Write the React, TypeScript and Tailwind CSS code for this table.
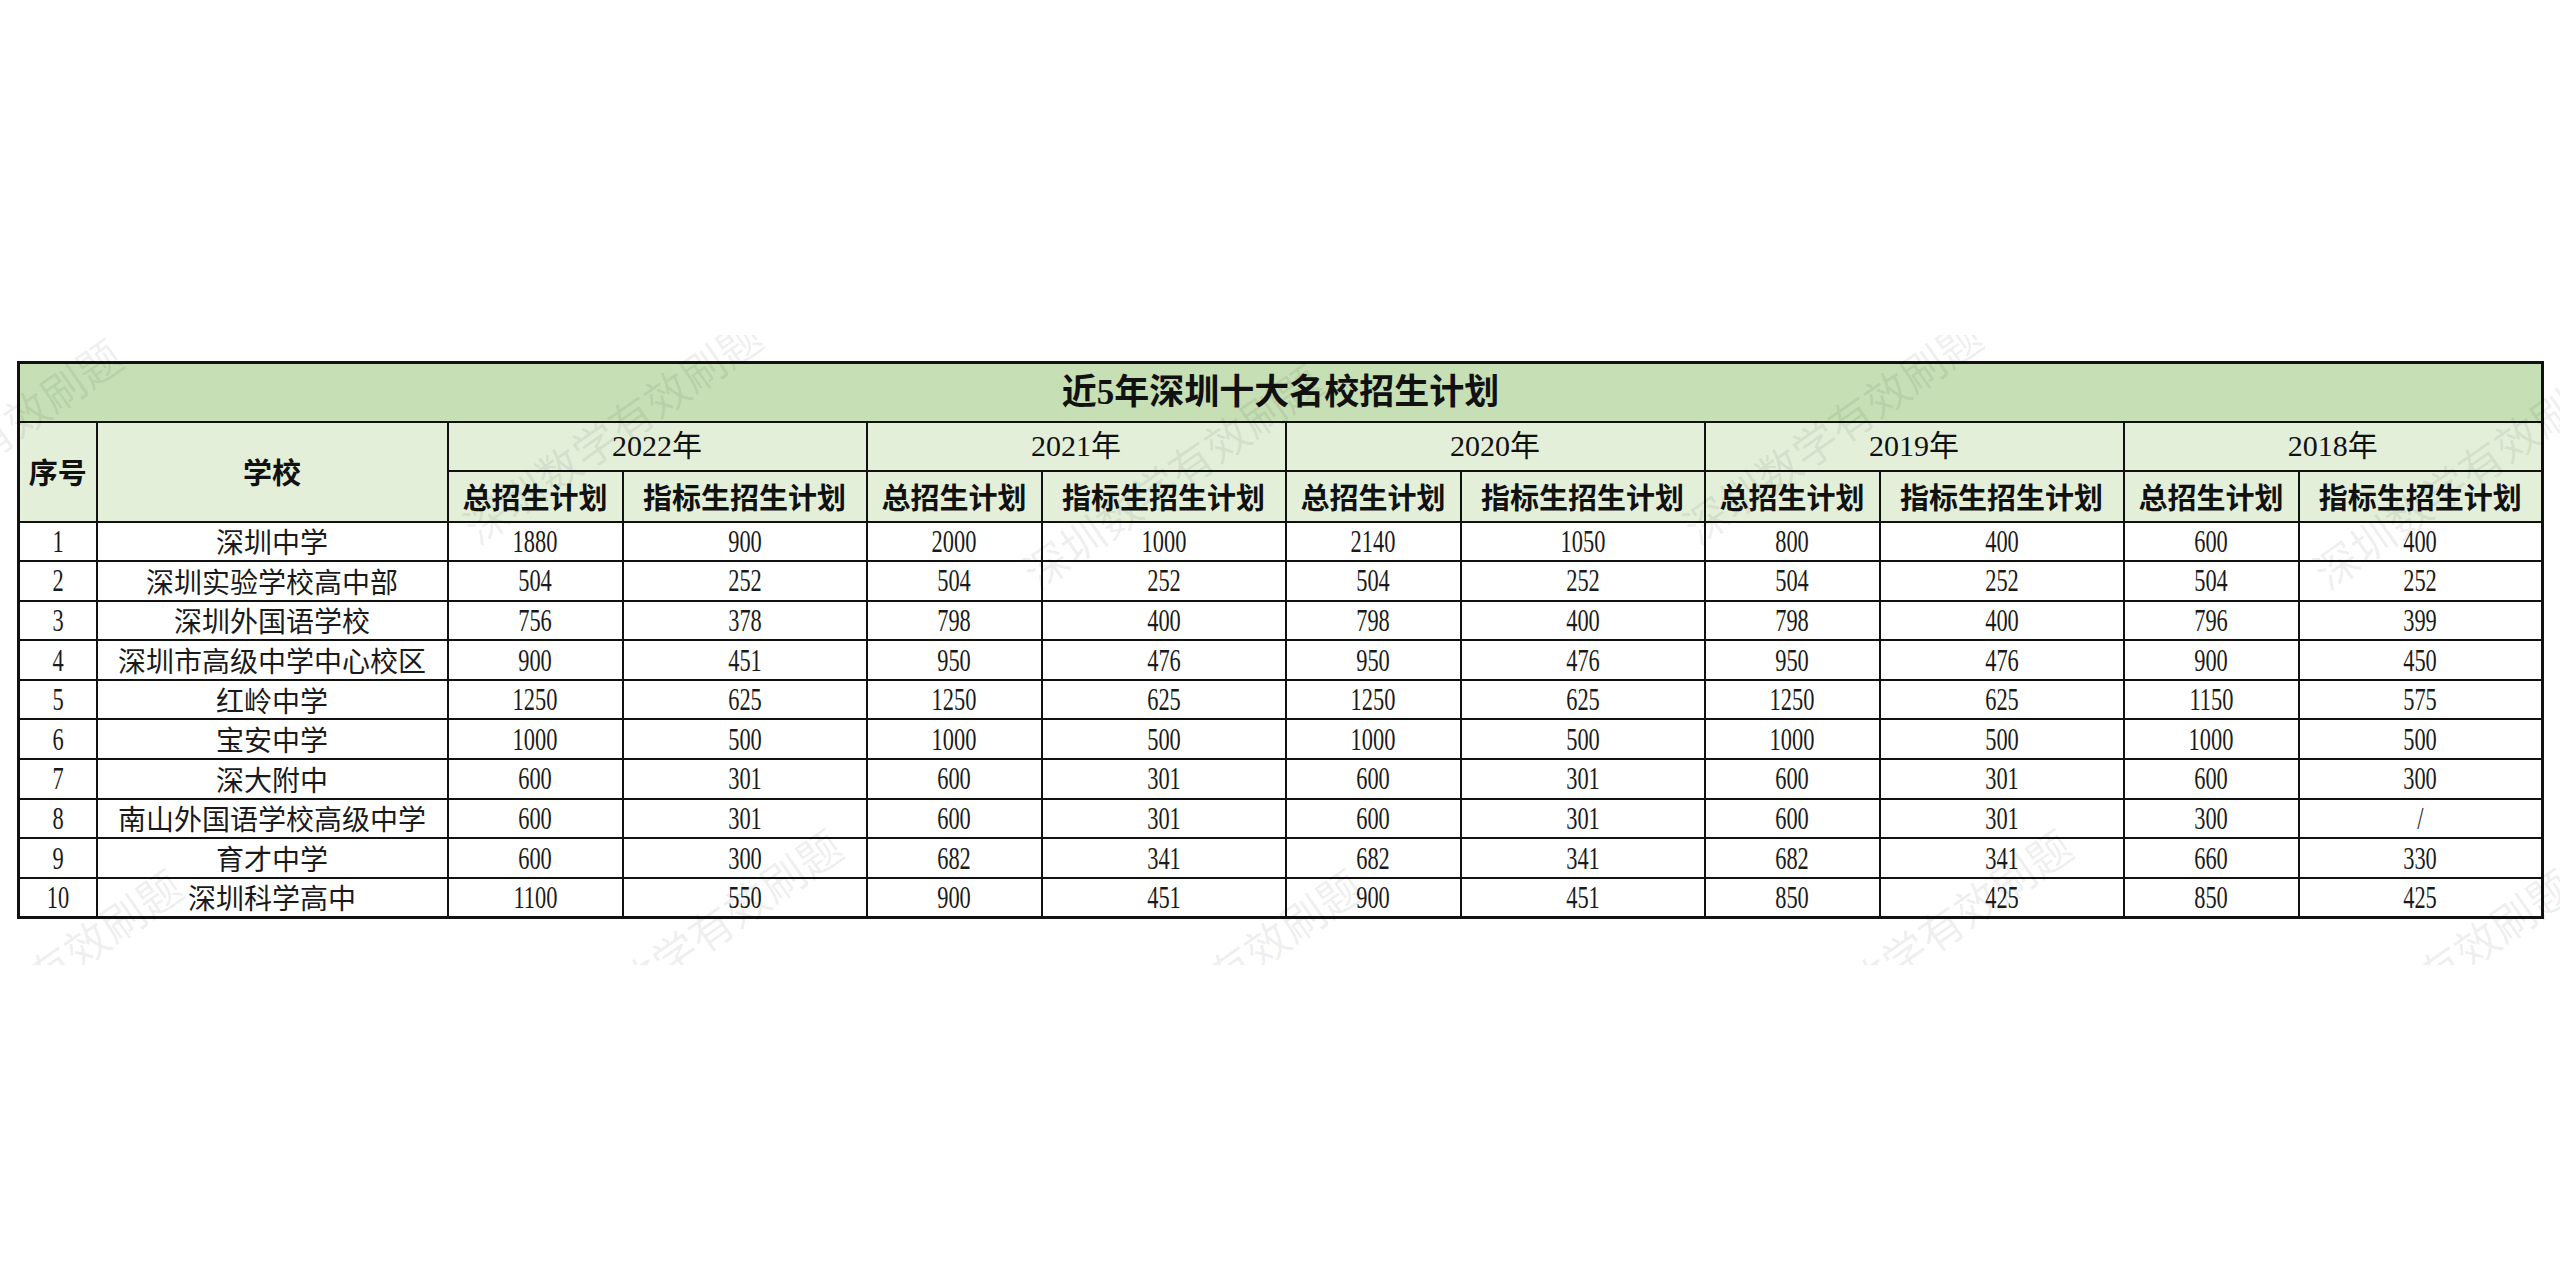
import React from "react";

type Cell = number | string;
const rows: Cell[][] = [
  [1, "深圳中学", 1880, 900, 2000, 1000, 2140, 1050, 800, 400, 600, 400],
  [2, "深圳实验学校高中部", 504, 252, 504, 252, 504, 252, 504, 252, 504, 252],
  [3, "深圳外国语学校", 756, 378, 798, 400, 798, 400, 798, 400, 796, 399],
  [4, "深圳市高级中学中心校区", 900, 451, 950, 476, 950, 476, 950, 476, 900, 450],
  [5, "红岭中学", 1250, 625, 1250, 625, 1250, 625, 1250, 625, 1150, 575],
  [6, "宝安中学", 1000, 500, 1000, 500, 1000, 500, 1000, 500, 1000, 500],
  [7, "深大附中", 600, 301, 600, 301, 600, 301, 600, 301, 600, 300],
  [8, "南山外国语学校高级中学", 600, 301, 600, 301, 600, 301, 600, 301, 300, "/"],
  [9, "育才中学", 600, 300, 682, 341, 682, 341, 682, 341, 660, 330],
  [10, "深圳科学高中", 1100, 550, 900, 451, 900, 451, 850, 425, 850, 425],
];

const years = ["2022", "2021", "2020", "2019", "2018"];

const marks: { x: number; y: number }[] = [
  { x: -160, y: 190 },
  { x: 480, y: 170 },
  { x: 1040, y: 215 },
  { x: 1700, y: 170 },
  { x: 2330, y: 215 },
  { x: -100, y: 720 },
  { x: 560, y: 680 },
  { x: 1080, y: 720 },
  { x: 1790, y: 680 },
  { x: 2290, y: 720 },
];

const td = "border-2 border-[#111] p-0 text-center align-middle";

function Num({ v }: { v: Cell }) {
  return (
    <span className="inline-block scale-x-[0.7] font-['Liberation_Serif',serif] text-[32px] leading-none text-[#1a1a1a]">
      {v}
    </span>
  );
}

export default function App() {
  return (
    <div className="relative w-[2560px] h-[1280px] bg-white overflow-hidden">
      <div className="pt-[361px] pl-[17px]">
        <table className="table-fixed border-collapse border-[3px] border-[#111] w-[2526px]">
          <colgroup>
            <col className="w-[78px]" />
            <col className="w-[351px]" />
            {years.map((y) => (
              <React.Fragment key={y}>
                <col className="w-[175px]" />
                <col className="w-[244px]" />
              </React.Fragment>
            ))}
          </colgroup>
          <thead>
            <tr className="h-[59px] bg-[#c6dfb4]">
              <th
                colSpan={12}
                className={`${td} font-['Liberation_Serif','Noto_Sans_CJK_SC',sans-serif] text-[35px] font-bold leading-none text-[#111]`}
              >
                近5年深圳十大名校招生计划
              </th>
            </tr>
            <tr className="h-[49px] bg-[#e3efd9]">
              <th
                rowSpan={2}
                className={`${td} font-['Noto_Sans_CJK_SC',sans-serif] text-[29px] font-bold leading-none text-[#111]`}
              >
                序号
              </th>
              <th
                rowSpan={2}
                className={`${td} font-['Noto_Sans_CJK_SC',sans-serif] text-[29px] font-bold leading-none text-[#111]`}
              >
                学校
              </th>
              {years.map((y) => (
                <th
                  key={y}
                  colSpan={2}
                  className={`${td} font-['Liberation_Serif','Noto_Sans_CJK_SC',serif] text-[30px] font-normal leading-none text-[#111]`}
                >
                  {y}年
                </th>
              ))}
            </tr>
            <tr className="h-[51px] bg-[#e3efd9]">
              {years.map((y) => (
                <React.Fragment key={y}>
                  <th
                    className={`${td} font-['Noto_Sans_CJK_SC',sans-serif] text-[29px] font-bold leading-none text-[#111]`}
                  >
                    总招生计划
                  </th>
                  <th
                    className={`${td} font-['Noto_Sans_CJK_SC',sans-serif] text-[29px] font-bold leading-none text-[#111]`}
                  >
                    指标生招生计划
                  </th>
                </React.Fragment>
              ))}
            </tr>
          </thead>
          <tbody>
            {rows.map((r) => (
              <tr key={String(r[0])} className="h-[39.6px] bg-white">
                <td className={td}>
                  <Num v={r[0]} />
                </td>
                <td
                  className={`${td} font-['Noto_Sans_CJK_SC',sans-serif] text-[28px] font-normal leading-none text-[#1a1a1a]`}
                >
                  {r[1]}
                </td>
                {r.slice(2).map((v, i) => (
                  <td key={i} className={td}>
                    <Num v={v} />
                  </td>
                ))}
              </tr>
            ))}
          </tbody>
        </table>
      </div>

      <div className="pointer-events-none absolute left-0 top-[335px] w-[2560px] h-[630px] overflow-hidden">
        {marks.map((m, i) => (
          <div
            key={i}
            className="absolute origin-bottom-left -rotate-[35deg] whitespace-nowrap font-['Noto_Sans_CJK_SC',sans-serif] text-[44px] leading-none text-black/[0.07]"
            style={{ left: m.x, top: m.y }}
          >
            深圳数学有效刷题
          </div>
        ))}
      </div>
    </div>
  );
}
